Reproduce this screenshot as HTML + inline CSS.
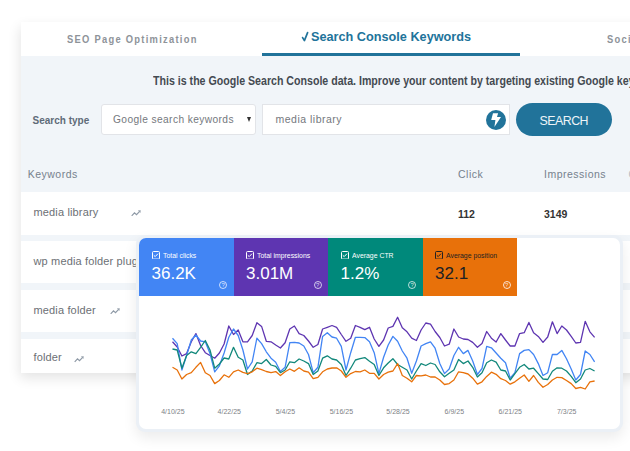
<!DOCTYPE html>
<html><head><meta charset="utf-8">
<style>
*{margin:0;padding:0;box-sizing:border-box}
html,body{width:630px;height:451px;overflow:hidden;background:#fff;font-family:"Liberation Sans",sans-serif}
.abs{position:absolute}
#card{position:absolute;left:21px;top:22px;width:640px;height:351px;background:#f1f5f9;box-shadow:-1px 5px 12px rgba(0,0,0,0.11)}
#tabs{position:absolute;left:0;top:0;width:640px;height:34px;background:#fff}
.t1{position:absolute;left:45.5px;top:11px;font-size:11px;font-weight:bold;letter-spacing:1.5px;color:#8e9399;white-space:nowrap;transform:scaleX(0.85);transform-origin:0 0}
.t2{position:absolute;left:289.5px;top:6.5px;font-size:13px;font-weight:bold;color:#21739a;white-space:nowrap;transform:scaleX(0.976);transform-origin:0 0}
.t3{position:absolute;left:586px;top:11px;font-size:11px;font-weight:bold;letter-spacing:1.5px;color:#8e9399;white-space:nowrap;transform:scaleX(0.85);transform-origin:0 0}
.uline{position:absolute;left:241px;top:31px;width:258px;height:3px;background:#21739a}
.desc{position:absolute;left:131.5px;top:52px;font-size:12px;font-weight:bold;color:#444a51;white-space:nowrap;transform:scaleX(0.885);transform-origin:0 0}
.stype{position:absolute;left:11.5px;top:93px;font-size:10px;font-weight:bold;color:#5f6b78;white-space:nowrap}
.sel{position:absolute;left:80px;top:82px;width:155px;height:31px;background:#fff;border:1px solid #e2e4e8;border-radius:3px}
.sel span{position:absolute;left:11px;top:9px;font-size:10.2px;letter-spacing:0.4px;color:#74787d;white-space:nowrap}
.sel i{position:absolute;left:145px;top:11.6px;width:0;height:0;border-left:2.5px solid transparent;border-right:2.5px solid transparent;border-top:5px solid #333}
.inp{position:absolute;left:241px;top:82px;width:248px;height:31px;background:#fff;border:1px solid #e2e4e8}
.inp span{position:absolute;left:12.5px;top:8px;font-size:10.5px;letter-spacing:0.5px;color:#74787d;white-space:nowrap}
.bolt{position:absolute;left:223px;top:5px;width:20px;height:20px;border-radius:50%;background:#21739a}
.btn{position:absolute;left:495px;top:81px;width:96px;height:33px;border-radius:17px;background:#21739a;color:#eef4f8;font-size:12.4px;text-align:center;line-height:37px;letter-spacing:-0.5px;text-indent:-0.5px}
.th{position:absolute;top:146px;font-size:10.5px;letter-spacing:0.5px;color:#76818d;white-space:nowrap}
.row{position:absolute;left:0;width:640px;background:#fff}
.kw{position:absolute;left:12.5px;font-size:11px;letter-spacing:0.15px;color:#6c7075;white-space:nowrap}
.num{position:absolute;font-size:10.5px;font-weight:bold;color:#333;white-space:nowrap}
#chart{position:absolute;left:136px;top:235px;width:487px;height:197px;border-radius:9px;background:#ebf0f6;box-shadow:0 6px 14px rgba(0,0,0,0.08)}
#chartin{position:absolute;left:3px;top:3px;width:481px;height:190.5px;border-radius:7px;background:#fff;overflow:hidden}
.tile{position:absolute;top:0;height:58px;width:94.5px}
.tile .lb{position:absolute;left:23.5px;top:12.5px;font-size:8px;color:#fff;white-space:nowrap;transform:scaleX(0.86);transform-origin:0 0}
.tile .cb{position:absolute;left:12.5px;top:12.8px}
.tile .val{position:absolute;left:12.5px;top:25.5px;font-size:17px;color:#fff;white-space:nowrap}
.tile .q{position:absolute;left:80px;top:42.6px;width:8.2px;height:8.2px;border:0.9px solid rgba(255,255,255,0.72);border-radius:50%;font-size:6px;line-height:6.4px;text-align:center;color:rgba(255,255,255,0.8)}
.dt{position:absolute;top:408px;width:40px;text-align:center;font-size:7px;color:#7d8186}
svg.ov{position:absolute;left:0;top:0}
</style></head><body>
<div id="card">
  <div id="tabs">
    <div class="t1">SEO Page Optimization</div>
    <div class="t2">Search Console Keywords</div>
    <svg class="abs" style="left:0;top:0" width="320" height="50"><path d="M281.6 15.6 L283.4 18.6 L286.6 10.6" fill="none" stroke="#21739a" stroke-width="1.7" stroke-linecap="round" stroke-linejoin="round"/></svg>
    <div class="t3">Soci</div>
    <div class="uline"></div>
  </div>
  <div class="desc">This is the Google Search Console data. Improve your content by targeting existing Google keywords</div>
  <div class="stype">Search type</div>
  <div class="sel"><span>Google search keywords</span><i></i></div>
  <div class="inp"><span>media library</span>
    <div class="bolt"><svg width="20" height="20" viewBox="0 0 20 20"><path d="M7 3.3 L12.1 3.3 L11 7 L15 7 L8.4 16.9 L9.4 10 L5.2 10 Z" fill="#fff"/></svg></div>
  </div>
  <div class="btn">SEARCH</div>
  <div class="th" style="left:6.7px">Keywords</div>
  <div class="th" style="left:437px">Click</div>
  <div class="th" style="left:523px">Impressions</div>
  <div class="th" style="left:607.5px;color:#b5bcc4">C</div>
  <div class="row" style="top:170px;height:43px">
    <div class="kw" style="top:14px">media library</div>
    <svg class="abs" style="left:110px;top:17.5px" width="10" height="6.5" viewBox="0 0 10 6.5"><path d="M0.7 5.8 L3.5 2.9 L5.5 4.6 L8.2 1.9" fill="none" stroke="#8e99a6" stroke-width="1.2"/><path d="M6.9 0.6 L9.7 0.3 L9.4 3.1 Z" fill="#8e99a6"/></svg>
    <div class="num" style="left:437px;top:16px">112</div>
    <div class="num" style="left:523px;top:16px">3149</div>
  </div>
  <div class="row" style="top:219px;height:42px">
    <div class="kw" style="top:13.5px">wp media folder plugin</div>
  </div>
  <div class="row" style="top:268px;height:42px">
    <div class="kw" style="top:14px">media folder</div>
    <svg class="abs" style="left:88.6px;top:17.6px" width="10" height="6.5" viewBox="0 0 10 6.5"><path d="M0.7 5.8 L3.5 2.9 L5.5 4.6 L8.2 1.9" fill="none" stroke="#8e99a6" stroke-width="1.2"/><path d="M6.9 0.6 L9.7 0.3 L9.4 3.1 Z" fill="#8e99a6"/></svg>
  </div>
  <div class="row" style="top:317px;height:34px">
    <div class="kw" style="top:11.5px">folder</div>
    <svg class="abs" style="left:53.4px;top:17px" width="10" height="6.5" viewBox="0 0 10 6.5"><path d="M0.7 5.8 L3.5 2.9 L5.5 4.6 L8.2 1.9" fill="none" stroke="#8e99a6" stroke-width="1.2"/><path d="M6.9 0.6 L9.7 0.3 L9.4 3.1 Z" fill="#8e99a6"/></svg>
  </div>
</div>
<div id="chart"><div id="chartin">
  <div class="tile" style="left:0;background:#4285f4"><svg class="cb" width="8" height="8.5" viewBox="0 0 8 8.5"><rect x="0.5" y="0.5" width="7" height="7.6" rx="1" fill="none" stroke="#fff" stroke-width="1"/><path d="M1.8 4.3 L3.2 5.6 L6 2.7" fill="none" stroke="#fff" stroke-width="1"/></svg><div class="lb">Total clicks</div><div class="val">36.2K</div><div class="q">?</div></div>
  <div class="tile" style="left:94.5px;background:#5e35b1"><svg class="cb" width="8" height="8.5" viewBox="0 0 8 8.5"><rect x="0.5" y="0.5" width="7" height="7.6" rx="1" fill="none" stroke="#fff" stroke-width="1"/><path d="M1.8 4.3 L3.2 5.6 L6 2.7" fill="none" stroke="#fff" stroke-width="1"/></svg><div class="lb">Total impressions</div><div class="val">3.01M</div><div class="q">?</div></div>
  <div class="tile" style="left:189px;background:#00897b"><svg class="cb" width="8" height="8.5" viewBox="0 0 8 8.5"><rect x="0.5" y="0.5" width="7" height="7.6" rx="1" fill="none" stroke="#fff" stroke-width="1"/><path d="M1.8 4.3 L3.2 5.6 L6 2.7" fill="none" stroke="#fff" stroke-width="1"/></svg><div class="lb">Average CTR</div><div class="val">1.2%</div><div class="q">?</div></div>
  <div class="tile" style="left:283.5px;background:#e8710a"><svg class="cb" width="8" height="8.5" viewBox="0 0 8 8.5"><rect x="0.5" y="0.5" width="7" height="7.6" rx="1" fill="none" stroke="#222" stroke-width="1"/><path d="M1.8 4.3 L3.2 5.6 L6 2.7" fill="none" stroke="#222" stroke-width="1"/></svg><div class="lb" style="color:#222">Average position</div><div class="val" style="color:#202124">32.1</div><div class="q" style="border-color:rgba(255,255,255,0.8)">?</div></div>
</div></div>
<svg class="ov" width="630" height="451" viewBox="0 0 630 451">
<polyline fill="none" stroke="#5e35b1" stroke-width="1.3" stroke-linejoin="round" points="172.5,341.8 177.2,347.0 181.9,356.0 186.6,353.6 191.3,341.8 195.9,333.6 200.6,345.5 205.3,352.7 210.0,355.5 214.7,358.2 219.4,353.0 224.1,344.0 228.8,326.0 233.5,334.5 238.2,330.0 242.9,341.8 247.5,341.8 252.2,335.5 256.9,322.7 261.6,326.4 266.3,341.3 271.0,341.8 275.7,345.0 280.4,348.0 285.1,342.7 289.8,329.0 294.4,326.0 299.1,333.6 303.8,335.5 308.5,341.0 313.2,347.3 317.9,344.5 322.6,329.0 327.3,327.3 332.0,325.5 336.6,327.3 341.3,334.5 346.0,341.3 350.7,338.2 355.4,325.5 360.1,327.3 364.8,329.6 369.5,327.3 374.2,339.0 378.9,346.4 383.6,340.0 388.2,328.0 392.9,326.4 397.6,317.3 402.3,327.8 407.0,331.8 411.7,338.2 416.4,340.5 421.1,330.0 425.8,323.0 430.5,324.2 435.1,331.5 439.8,337.5 444.5,346.0 449.2,344.2 453.9,329.0 458.6,337.0 463.3,339.0 468.0,339.5 472.7,342.4 477.4,347.3 482.0,343.6 486.7,331.5 491.4,338.2 496.1,342.0 500.8,333.6 505.5,340.0 510.2,346.0 514.9,346.0 519.6,333.6 524.2,332.7 528.9,322.4 533.6,332.7 538.3,336.4 543.0,342.4 547.7,337.0 552.4,321.8 557.1,333.6 561.8,326.0 566.5,330.0 571.2,336.4 575.8,343.0 580.5,342.4 585.2,321.3 589.9,331.8 594.6,337.3"/>
<polyline fill="none" stroke="#4285f4" stroke-width="1.3" stroke-linejoin="round" points="172.5,338.2 177.2,343.6 181.9,370.0 186.6,355.5 191.3,340.0 195.9,335.0 200.6,341.0 205.3,341.8 210.0,353.6 214.7,371.8 219.4,365.8 224.1,353.0 228.8,337.3 233.5,329.0 238.2,335.5 242.9,350.0 247.5,369.0 252.2,361.8 256.9,338.2 261.6,343.6 266.3,351.8 271.0,358.2 275.7,362.2 280.4,371.5 285.1,367.3 289.8,342.7 294.4,342.4 299.1,343.0 303.8,346.0 308.5,354.5 313.2,372.7 317.9,367.3 322.6,336.4 327.3,332.7 332.0,337.0 336.6,338.2 341.3,346.4 346.0,370.0 350.7,352.7 355.4,337.3 360.1,337.3 364.8,337.6 369.5,341.8 374.2,352.7 378.9,373.6 383.6,357.3 388.2,345.0 392.9,336.4 397.6,341.3 402.3,351.0 407.0,358.2 411.7,373.3 416.4,361.0 421.1,346.0 425.8,343.6 430.5,341.8 435.1,348.2 439.8,363.5 444.5,373.6 449.2,369.0 453.9,355.5 458.6,347.3 463.3,353.6 468.0,350.4 472.7,361.0 477.4,374.5 482.0,368.5 486.7,346.4 491.4,347.8 496.1,353.0 500.8,358.2 505.5,362.7 510.2,378.2 514.9,372.7 519.6,353.6 524.2,350.4 528.9,349.6 533.6,354.5 538.3,363.6 543.0,375.5 547.7,372.7 552.4,354.5 557.1,354.5 561.8,350.4 566.5,358.7 571.2,369.0 575.8,380.0 580.5,374.5 585.2,351.0 589.9,354.5 594.6,361.8"/>
<polyline fill="none" stroke="#12887b" stroke-width="1.3" stroke-linejoin="round" points="172.5,349.0 177.2,350.0 181.9,368.2 186.6,355.5 191.3,351.8 195.9,353.6 200.6,347.3 205.3,340.5 210.0,350.0 214.7,368.2 219.4,364.0 224.1,358.0 228.8,359.0 233.5,347.3 238.2,357.3 242.9,360.0 247.5,374.5 252.2,371.0 256.9,362.7 261.6,363.6 266.3,359.5 271.0,365.0 275.7,366.4 280.4,372.7 285.1,370.0 289.8,361.8 294.4,362.7 299.1,359.0 303.8,361.0 308.5,363.6 313.2,374.5 317.9,371.0 322.6,358.2 327.3,355.8 332.0,359.0 336.6,360.0 341.3,364.5 346.0,375.5 350.7,368.2 355.4,360.0 360.1,358.7 364.8,357.6 369.5,361.3 374.2,364.5 378.9,375.5 383.6,367.8 388.2,363.0 392.9,358.7 397.6,364.5 402.3,367.3 407.0,370.0 411.7,379.0 416.4,371.0 421.1,363.6 425.8,365.5 430.5,363.0 435.1,364.5 439.8,371.8 444.5,376.7 449.2,373.3 453.9,370.0 458.6,359.5 463.3,363.6 468.0,361.0 472.7,367.3 477.4,377.0 482.0,372.7 486.7,362.7 491.4,360.0 496.1,362.2 500.8,370.0 505.5,371.0 510.2,380.0 514.9,373.6 519.6,367.3 524.2,364.5 528.9,369.0 533.6,368.2 538.3,373.6 543.0,379.0 547.7,379.5 552.4,371.3 557.1,367.8 561.8,368.2 566.5,371.0 571.2,376.4 575.8,382.7 580.5,379.0 585.2,370.0 589.9,368.5 594.6,371.0"/>
<polyline fill="none" stroke="#e8710a" stroke-width="1.3" stroke-linejoin="round" points="172.5,367.3 177.2,370.0 181.9,379.0 186.6,374.5 191.3,372.7 195.9,367.3 200.6,362.4 205.3,372.7 210.0,375.5 214.7,383.6 219.4,380.5 224.1,374.8 228.8,377.3 233.5,371.8 238.2,370.0 242.9,372.4 247.5,373.6 252.2,371.8 256.9,368.2 261.6,369.6 266.3,371.5 271.0,372.7 275.7,371.6 280.4,375.6 285.1,371.8 289.8,369.0 294.4,371.3 299.1,367.8 303.8,371.0 308.5,372.2 313.2,378.7 317.9,377.3 322.6,371.8 327.3,369.0 332.0,368.0 336.6,367.8 341.3,371.0 346.0,377.3 350.7,373.6 355.4,371.5 360.1,371.8 364.8,370.0 369.5,373.3 374.2,373.3 378.9,379.0 383.6,374.5 388.2,372.2 392.9,371.0 397.6,363.6 402.3,375.5 407.0,378.2 411.7,381.8 416.4,375.5 421.1,375.8 425.8,375.0 430.5,377.0 435.1,377.0 439.8,380.0 444.5,384.5 449.2,383.6 453.9,380.0 458.6,371.8 463.3,372.7 468.0,374.0 472.7,378.2 477.4,384.2 482.0,381.8 486.7,376.4 491.4,372.2 496.1,374.3 500.8,378.7 505.5,380.5 510.2,384.2 514.9,381.8 519.6,378.2 524.2,375.0 528.9,381.3 533.6,375.5 538.3,382.4 543.0,387.3 547.7,384.5 552.4,380.0 557.1,377.3 561.8,377.6 566.5,380.5 571.2,383.6 575.8,388.5 580.5,387.3 585.2,389.0 589.9,381.8 594.6,381.0"/>

</svg>
<div class="dt" style="left:152.9px">4/10/25</div><div class="dt" style="left:209.3px">4/22/25</div><div class="dt" style="left:265.4px">5/4/25</div><div class="dt" style="left:321.4px">5/16/25</div><div class="dt" style="left:378.0px">5/28/25</div><div class="dt" style="left:434.3px">6/9/25</div><div class="dt" style="left:490.3px">6/21/25</div><div class="dt" style="left:546.7px">7/3/25</div>
</body></html>
